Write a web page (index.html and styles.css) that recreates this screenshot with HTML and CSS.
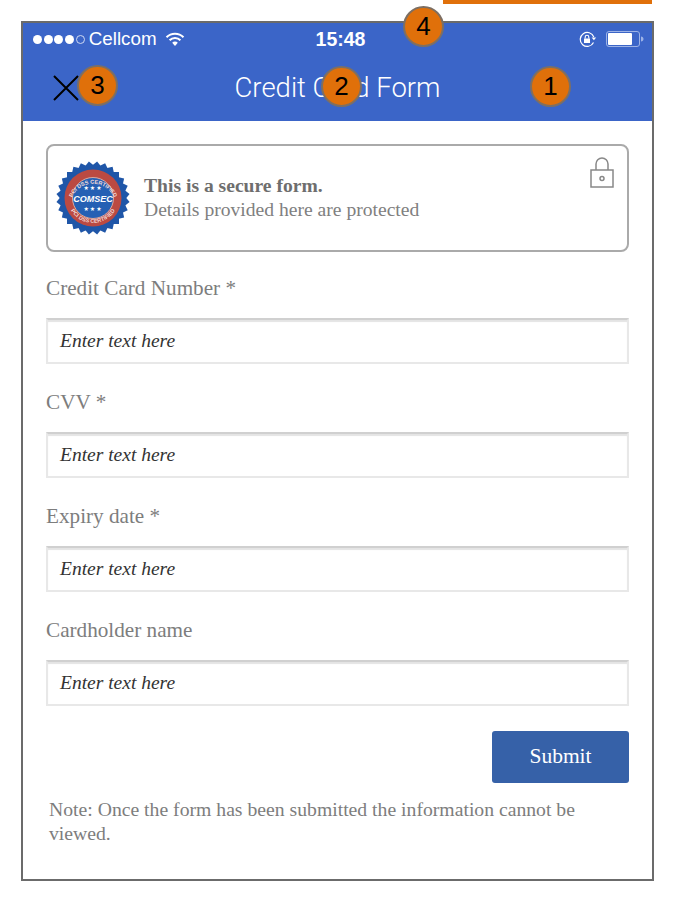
FILE: index.html
```html
<!DOCTYPE html>
<html>
<head lang="en">
    <meta charset="UTF-8">
    <title>Credit Card Form</title>
    <link rel="stylesheet" href="styles.css">
</head>
<body>
<div class="top-bar"></div>
<div class="frame">
    <div class="header">
        <div class="status">
            <div class="status-left">
                <span class="dots"><i></i><i></i><i></i><i></i><i class="off"></i></span>
                <span class="carrier">Cellcom</span>
                <svg class="wifi" width="20" height="15" viewBox="0 0 20 15">
                    <path d="M1.5 5.2a12 12 0 0 1 17 0" fill="none" stroke="#fff" stroke-width="2"/>
                    <path d="M4.6 8.2a7.6 7.6 0 0 1 10.8 0" fill="none" stroke="#fff" stroke-width="2"/>
                    <path d="M7.2 10.8a3.8 3.8 0 0 1 5.6 0L10 14z" fill="#fff"/>
                </svg>
            </div>
            <div class="time">15:48</div>
            <div class="status-right">
                <svg class="rotate" width="18" height="17" viewBox="0 0 18 17">
                    <path d="M14.5 11.5A7 7 0 1 1 14.8 6" fill="none" stroke="#fff" stroke-width="1.2"/>
                    <path d="M12.6 6.4h4.6L14.9 9.2z" fill="#fff"/>
                    <rect x="5" y="7.5" width="6" height="4.5" fill="#fff"/>
                    <path d="M6.2 7.5V6a1.8 1.8 0 0 1 3.6 0v1.5" fill="none" stroke="#fff" stroke-width="1.1"/>
                </svg>
                <svg class="battery" width="38" height="16" viewBox="0 0 38 16">
                    <rect x="0.5" y="0.5" width="33" height="15" rx="2.5" fill="none" stroke="#9db3e6"/>
                    <rect x="2" y="2" width="24" height="12" rx="1" fill="#fff"/>
                    <path d="M35 5.5c1.5 0 2.5 1 2.5 2.5s-1 2.500-2.500 2.500z" fill="#9db3e6"/>
                </svg>
            </div>
        </div>
        <div class="nav">
            <svg class="close" width="26" height="26" viewBox="0 0 26 26">
                <path d="M1 1l24 24M25 1L1 25" stroke="#000" stroke-width="2" fill="none"/>
            </svg>
            <div class="title">Credit Card Form</div>
            <div></div>
        </div>
    </div>

    <div class="content">
        <div class="secure">
            <svg class="seal" width="74" height="74" viewBox="-37 -37 74 74">
                <defs>
                    <rect id="sq" x="-26" y="-26" width="52" height="52" fill="#1f56a8"/>
                    <path id="arcTop" d="M-22.500 4A23 23 0 0 1 22.500 4"/>
                    <path id="arcBottom" d="M-25.500 4A26 26 0 0 0 25.500 4"/>
                </defs>
                <use href="#sq"/>
                <use href="#sq" transform="rotate(12.857)"/>
                <use href="#sq" transform="rotate(25.714)"/>
                <use href="#sq" transform="rotate(38.571)"/>
                <use href="#sq" transform="rotate(51.429)"/>
                <use href="#sq" transform="rotate(64.286)"/>
                <use href="#sq" transform="rotate(77.143)"/>
                <circle r="28.500" fill="#bb4a42"/>
                <circle r="20.500" fill="#2560b4" stroke="#d9a9a0" stroke-width="1"/>
                <text class="seal-ring"><textPath href="#arcTop" startOffset="50%" text-anchor="middle">PCI DSS CERTIFIED</textPath></text>
                <text class="seal-ring"><textPath href="#arcBottom" startOffset="50%" text-anchor="middle">PCI DSS CERTIFIED</textPath></text>
                <text class="seal-stars" y="-8" text-anchor="middle">★★★</text>
                <text class="seal-name" y="3.500" text-anchor="middle">COMSEC</text>
                <text class="seal-stars" y="13" text-anchor="middle">★★★</text>
            </svg>
            <div class="secure-text">
                <b>This is a secure form.</b>
                <span>Details provided here are protected</span>
            </div>
            <svg class="lock" width="24" height="31" viewBox="0 0 24 31">
                <rect x="1" y="13" width="22" height="17" fill="none" stroke="#888" stroke-width="1.5"/>
                <path d="M6 13V7a6 6 0 0 1 12 0v6" fill="none" stroke="#888" stroke-width="1.5"/>
                <circle cx="12" cy="21.500" r="2" fill="none" stroke="#888" stroke-width="1.500"/>
            </svg>
        </div>

        <div class="field">
            <label>Credit Card Number *</label>
            <div class="input">Enter text here</div>
        </div>
        <div class="field">
            <label>CVV *</label>
            <div class="input">Enter text here</div>
        </div>
        <div class="field">
            <label>Expiry date *</label>
            <div class="input">Enter text here</div>
        </div>
        <div class="field">
            <label>Cardholder name</label>
            <div class="input">Enter text here</div>
        </div>

        <div class="actions">
            <a class="submit" href="javascript:void(0)">Submit</a>
        </div>
        <p class="note">Note: Once the form has been submitted the information cannot be viewed.</p>
    </div>

    <span class="badge badge1">1</span>
    <span class="badge badge2">2</span>
    <span class="badge badge3">3</span>
    <span class="badge badge4">4</span>
</div>
</body>
</html>
```

FILE: styles.css
```css
*{
    margin: 0;
    padding: 0;
    box-sizing: border-box;
}
body{
    background: #fff;
    font-family: "Liberation Serif", serif;
}
a{
    text-decoration: none;
}
.top-bar{
    width: 209px;
    height: 4px;
    margin-left: 443px;
    background: #e0700a;
}
.frame{
    position: relative;
    width: 633px;
    height: 860px;
    margin: 17px 0 0 21px;
    border: 2px solid #6b6b6b;
}
.header{
    height: 98px;
    background: #3b65c8;
    color: #fff;
}
.status{
    display: grid;
    grid-template-columns: 1fr auto 1fr;
    align-items: center;
    height: 32px;
    padding: 0 8px 0 10px;
    font-family: "Liberation Sans", sans-serif;
    font-size: 18.8px;
}
.status-left{
    display: flex;
    align-items: center;
}
.dots{
    display: flex;
    gap: 1.7px;
    margin-right: 4px;
}
.dots i{
    width: 9px;
    height: 9px;
    border-radius: 50%;
    background: #fff;
}
.dots .off{
    background: none;
    border: 1px solid #cfd9f2;
}
.wifi{
    margin-left: 8px;
}
.time{
    font-weight: bold;
    font-size: 19.5px;
    padding-left: 4px;
}
.status-right{
    display: flex;
    align-items: center;
    justify-content: flex-end;
    gap: 9px;
}
.nav{
    display: grid;
    grid-template-columns: 1fr auto 1fr;
    align-items: center;
    height: 66px;
    padding-bottom: 1px;
}
.close{
    margin-left: 30px;
}
.title{
    font-family: Roboto, sans-serif;
    font-weight: 300;
    font-size: 27.5px;
}
.content{
    padding: 23px 23px 0;
}
.secure{
    position: relative;
    display: flex;
    align-items: center;
    height: 108px;
    padding-left: 8px;
    border: 2px solid #aaa;
    border-radius: 8px;
    color: #808080;
}
.secure-text{
    display: flex;
    flex-direction: column;
    margin-left: 14px;
    font-size: 19.6px;
    line-height: 24px;
}
.secure-text b{
    color: #6e6e6e;
}
.lock{
    position: absolute;
    right: 13px;
    top: 11px;
}
.seal-ring{
    font-family: "Liberation Sans", sans-serif;
    font-weight: bold;
    font-size: 5.500px;
    fill: #f3dcd8;
}
.seal-name{
    font-family: "Liberation Sans", sans-serif;
    font-weight: bold;
    font-style: italic;
    font-size: 9px;
    fill: #fff;
}
.seal-stars{
    font-family: "DejaVu Sans", sans-serif;
    font-size: 6px;
    letter-spacing: 1px;
    fill: #fff;
}
.field{
    height: 114px;
    padding-top: 23px;
}
.field label{
    display: block;
    height: 43px;
    font-size: 21.2px;
    line-height: 27px;
    color: #7d7d7d;
}
.input{
    height: 46px;
    padding-left: 12px;
    border: 2px solid #e8e8e8;
    border-top-color: #d0d0d0;
    box-shadow: inset 0 2px 1px #e4e4e4;
    font-style: italic;
    font-size: 19.5px;
    line-height: 42px;
    color: #333;
}
.actions{
    display: flex;
    justify-content: flex-end;
    margin-top: 23px;
}
.submit{
    display: block;
    width: 137px;
    height: 52px;
    border-radius: 3px;
    background: #3661a8;
    color: #fff;
    font-size: 21.5px;
    line-height: 50px;
    text-align: center;
}
.note{
    margin-top: 14px;
    padding: 0 3px;
    font-size: 19.7px;
    line-height: 24px;
    color: #7d7d7d;
}
.badge{
    position: absolute;
    width: 41px;
    height: 41px;
    border: 2px solid #7d6f63;
    border-radius: 50%;
    background: #e0700a;
    color: #000;
    font-family: "Liberation Sans", sans-serif;
    font-size: 26px;
    line-height: 37px;
    text-align: center;
}
.badge1{
    left: 507px;
    top: 43px;
}
.badge2{
    left: 298px;
    top: 43px;
}
.badge3{
    left: 54px;
    top: 42px;
}
.badge4{
    left: 380px;
    top: -17px;
}
```
